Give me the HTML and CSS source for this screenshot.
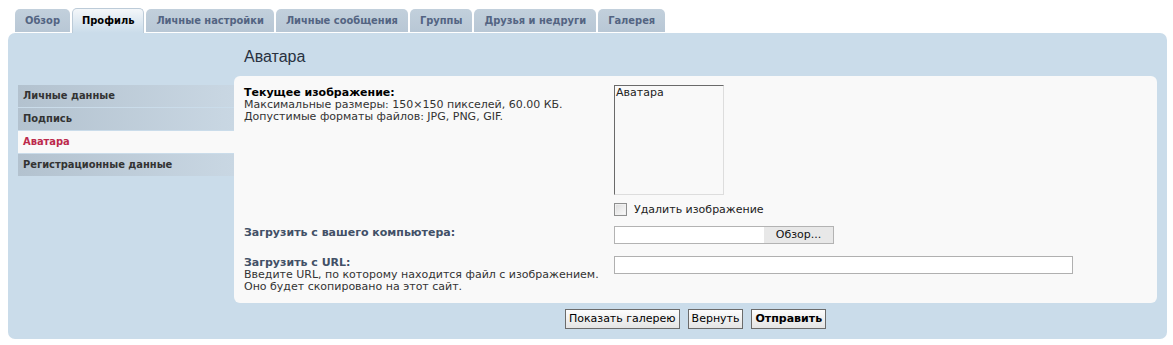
FILE: index.html
```html
<!DOCTYPE html>
<html lang="ru">
<head>
<meta charset="utf-8">
<title>Аватара</title>
<link rel="stylesheet" href="styles.css">
</head>
<body>
<div class="tabs">
  <a class="tab">Обзор</a>
  <a class="tab active">Профиль</a>
  <a class="tab">Личные настройки</a>
  <a class="tab">Личные сообщения</a>
  <a class="tab">Группы</a>
  <a class="tab">Друзья и недруги</a>
  <a class="tab">Галерея</a>
</div>
<div class="panel">
  <div class="layout">
    <h2 class="title">Аватара</h2>
    <ul class="menu">
      <li class="menu-item">Личные данные</li>
      <li class="menu-item">Подпись</li>
      <li class="menu-item active">Аватара</li>
      <li class="menu-item">Регистрационные данные</li>
    </ul>
    <div class="content">
      <div class="row row-current">
        <div class="dt">
          <strong class="dt-strong">Текущее изображение:</strong>
          <span class="desc">Максимальные размеры: 150×150 пикселей, 60.00 КБ.</span>
          <span class="desc">Допустимые форматы файлов: JPG, PNG, GIF.</span>
        </div>
        <div class="dd">
          <div class="avatar">Аватара</div>
          <label class="check"><input class="checkbox" type="checkbox"><span class="check-label">Удалить изображение</span></label>
        </div>
      </div>
      <div class="row row-upload">
        <div class="dt"><span class="label">Загрузить с вашего компьютера:</span></div>
        <div class="dd">
          <div class="file"><span class="file-field"></span><span class="file-browse">Обзор...</span></div>
        </div>
      </div>
      <div class="row row-url">
        <div class="dt">
          <span class="label">Загрузить с URL:</span>
          <span class="desc">Введите URL, по которому находится файл с изображением.</span>
          <span class="desc">Оно будет скопировано на этот сайт.</span>
        </div>
        <div class="dd">
          <input class="url" type="text">
        </div>
      </div>
    </div>
    <div class="buttons">
      <button class="btn" type="button">Показать галерею</button>
      <button class="btn" type="button">Вернуть</button>
      <button class="btn primary" type="button">Отправить</button>
    </div>
  </div>
</div>
</body>
</html>
```

FILE: styles.css
```css
* { box-sizing: border-box; }

body {
  margin: 0;
  background: #ffffff;
  font-family: "DejaVu Sans", Verdana, sans-serif;
  font-size: 11px;
  color: #333333;
}

.tabs {
  display: flex;
  align-items: flex-start;
  gap: 2px;
  height: 25px;
  margin-top: 8px;
  padding-left: 15px;
}

.tab {
  display: block;
  height: 23px;
  margin-top: 1px;
  padding: 0 10px;
  line-height: 23px;
  font-family: "DejaVu Sans Condensed", "DejaVu Sans", sans-serif;
  font-weight: bold;
  font-size: 11px;
  color: #536482;
  background: linear-gradient(#c2d0dc, #b8c7d5);
  border-radius: 5px 5px 0 0;
  white-space: nowrap;
}

.tab.active {
  height: 25px;
  margin-top: 0;
  padding-top: 1px;
  color: #000000;
  background: linear-gradient(#f4f7fa, #cadcea);
  border: 1px solid #bccbd8;
  border-bottom: none;
  padding-left: 9px;
  padding-right: 9px;
  line-height: 22px;
}

.panel {
  margin: 0 6px 0 8px;
  padding: 14px 10px 10px 10px;
  background: #cadcea;
  border-radius: 7px;
}

.layout {
  display: grid;
  grid-template-columns: 216px 1fr;
  grid-template-areas:
    ". title"
    "menu content"
    ". buttons";
}

.title {
  grid-area: title;
  margin: 0 0 9px 10px;
  font-family: "Liberation Sans", Arial, sans-serif;
  font-weight: normal;
  font-size: 16px;
  line-height: 20px;
  color: #28313f;
}

.menu {
  grid-area: menu;
  align-self: start;
  list-style: none;
  margin: 9px 0 0 0;
  padding: 0;
}

.menu-item {
  height: 22px;
  margin-bottom: 1px;
  padding-left: 5px;
  line-height: 22px;
  font-family: "DejaVu Sans Condensed", "DejaVu Sans", sans-serif;
  font-weight: bold;
  color: #333333;
  background: linear-gradient(to right, #b3c2cf, #c9d7e3);
}

.menu-item.active {
  background: #f9f9f9;
  color: #bc2a4d;
}

.content {
  grid-area: content;
  padding: 9px 10px 10px 10px;
  background: #f9f9f9;
  border-radius: 6px;
}

.row {
  display: flex;
  align-items: flex-start;
}

.row-upload { margin-top: 10px; }
.row-url { margin-top: 12px; }

.dt {
  width: 370px;
  flex: none;
  padding-top: 1px;
  line-height: 12px;
}

.row-current .dt { padding-top: 2px; }

.dt-strong {
  display: block;
  color: #000000;
  font-weight: bold;
}

.label {
  display: block;
  color: #425067;
  font-weight: bold;
}

.desc {
  display: block;
  color: #333333;
}

.dd {
  flex: 1;
}

.avatar {
  width: 110px;
  height: 110px;
  padding: 1px 0 0 1px;
  border: 1px solid;
  border-color: #6a6a6a #dddddd #dddddd #6a6a6a;
  line-height: 12px;
  color: #222222;
}

.check {
  display: flex;
  align-items: center;
  height: 13px;
  margin-top: 8px;
}

.checkbox {
  appearance: none;
  -webkit-appearance: none;
  width: 13px;
  height: 13px;
  margin: 0;
  border: 1px solid #8e8f8f;
  background: linear-gradient(135deg, #dcdcdc, #fbfbfb);
  box-shadow: inset 0 0 0 1px #f0f0f0;
}

.check-label {
  margin-left: 7px;
  color: #222222;
  line-height: 13px;
}

.file {
  display: flex;
  width: 220px;
  height: 18px;
  border: 1px solid #b3b3b3;
  background: #ffffff;
}

.file-field {
  flex: 1;
}

.file-browse {
  width: 69px;
  flex: none;
  background: #e8e8e8;
  text-align: center;
  line-height: 16px;
  color: #111111;
}

.url {
  display: block;
  width: 459px;
  height: 18px;
  margin: 0;
  padding: 0 2px;
  border: 1px solid #b0b0b0;
  background: #ffffff;
  font: inherit;
}

.buttons {
  grid-area: buttons;
  display: flex;
  justify-content: center;
  gap: 8px;
  margin-top: 6px;
}

.btn {
  height: 20px;
  margin: 0;
  padding: 0 3px;
  border: 1px solid #6b6b6b;
  background: linear-gradient(#fdfdfd, #e4e4e4);
  font-family: "DejaVu Sans", Verdana, sans-serif;
  font-size: 11px;
  color: #000000;
  line-height: 18px;
}

.btn.primary {
  font-weight: bold;
}
```
